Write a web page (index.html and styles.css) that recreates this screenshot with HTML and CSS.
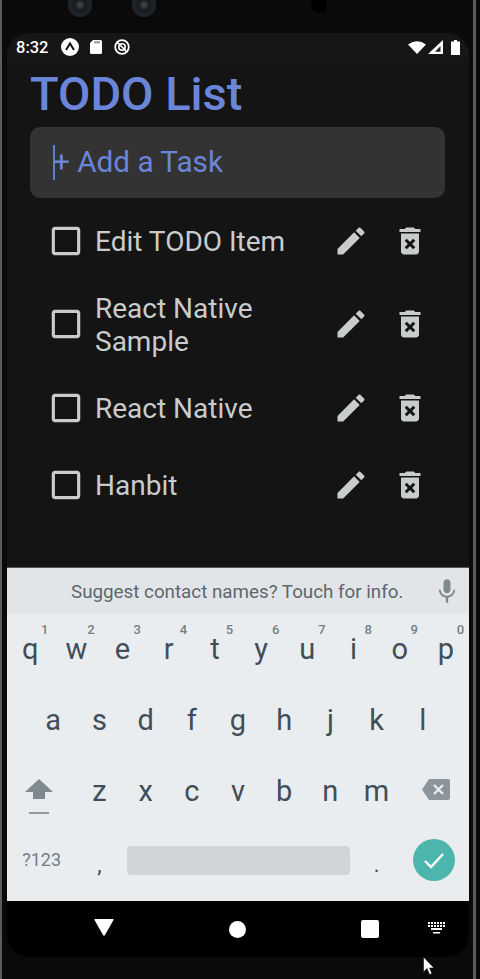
FILE: index.html
```html
<!DOCTYPE html>
<html lang="en">
<head>
<meta charset="utf-8">
<title>TODO List</title>
<link rel="stylesheet" href="styles.css">
</head>
<body>
<div class="device">
  <span class="lens lens-a"></span><span class="lens lens-b"></span><span class="hole"></span>
  <main class="screen">
    <header class="status">
      <span class="time">8:32</span>
      <svg class="st-expo" viewBox="0 0 18 18"><circle cx="9" cy="9" r="9" fill="#fff"/><path d="M5 12 9 5.500 13 12" fill="none" stroke="#111" stroke-width="2"/></svg>
      <svg class="st-sd" viewBox="0 0 12 14"><path d="M3 0H10.500Q12 0 12 1.500V12.500Q12 14 10.500 14H1.500Q0 14 0 12.500V3Z" fill="#fff"/><path d="M5 1v2.500M7 1v2.500M9 1v2.500" stroke="#222" stroke-width=".8"/></svg>
      <svg class="st-block" viewBox="0 0 16 16"><circle cx="8" cy="8" r="6.800" fill="none" stroke="#fff" stroke-width="1.800"/><circle cx="8" cy="8" r="3.200" fill="none" stroke="#fff" stroke-width="1.600"/><path d="M3 3 13 13" stroke="#fff" stroke-width="1.600"/></svg>
      <span class="st-space"></span>
      <svg class="st-wifi" viewBox="0 0 18 13"><path d="M0 3.500Q9-3 18 3.500L9 13Z" fill="#fff"/></svg>
      <svg class="st-signal" viewBox="0 0 15 14"><path d="M15 0V14H0Z" fill="#fff"/><path d="M12.500 6V11.800H7Z" fill="#222"/></svg>
      <svg class="st-batt" viewBox="0 0 9 15"><path d="M3 0H6V1.500H9V15H0V1.500H3Z" fill="#fff"/></svg>
    </header>
    <section class="app">
      <h1 class="title">TODO List</h1>
      <div class="input"><span class="caret"></span>+ Add a Task</div>
      <ul class="list">
        <li class="item">
          <svg class="icon check-icon" viewBox="0 0 24 24"><path d="M19 5v14H5V5h14m0-2H5c-1.100 0-2 .9-2 2v14c0 1.100.9 2 2 2h14c1.100 0 2-.9 2-2V5c0-1.100-.9-2-2-2z"/></svg>
          <span class="label">Edit TODO Item</span>
          <svg class="icon edit-icon" viewBox="0 0 24 24"><path d="M3 17.250V21h3.750L17.810 9.940l-3.750-3.750L3 17.250zM20.710 7.040c.39-.39.39-1.020 0-1.410l-2.340-2.340c-.39-.39-1.020-.39-1.410 0l-1.830 1.830 3.750 3.750 1.830-1.830z"/></svg>
          <svg class="icon" viewBox="0 0 24 24"><path d="M6 19c0 1.100.9 2 2 2h8c1.100 0 2-.9 2-2V7H6v12zm2.460-7.120l1.410-1.410L12 12.590l2.120-2.120 1.410 1.410L13.410 14l2.120 2.120-1.410 1.410L12 15.410l-2.120 2.120-1.410-1.410L10.590 14l-2.130-2.120zM15.500 4l-1-1h-5l-1 1H5v2h14V4z"/></svg>
        </li>
        <li class="item">
          <svg class="icon check-icon" viewBox="0 0 24 24"><path d="M19 5v14H5V5h14m0-2H5c-1.100 0-2 .9-2 2v14c0 1.100.9 2 2 2h14c1.100 0 2-.9 2-2V5c0-1.100-.9-2-2-2z"/></svg>
          <span class="label">React Native Sample</span>
          <svg class="icon edit-icon" viewBox="0 0 24 24"><path d="M3 17.250V21h3.750L17.810 9.940l-3.750-3.750L3 17.250zM20.710 7.040c.39-.39.39-1.020 0-1.410l-2.340-2.340c-.39-.39-1.020-.39-1.410 0l-1.830 1.830 3.750 3.750 1.830-1.830z"/></svg>
          <svg class="icon" viewBox="0 0 24 24"><path d="M6 19c0 1.100.9 2 2 2h8c1.100 0 2-.9 2-2V7H6v12zm2.460-7.120l1.410-1.410L12 12.590l2.120-2.120 1.410 1.410L13.410 14l2.120 2.120-1.410 1.410L12 15.410l-2.120 2.120-1.410-1.410L10.590 14l-2.130-2.120zM15.500 4l-1-1h-5l-1 1H5v2h14V4z"/></svg>
        </li>
        <li class="item">
          <svg class="icon check-icon" viewBox="0 0 24 24"><path d="M19 5v14H5V5h14m0-2H5c-1.100 0-2 .9-2 2v14c0 1.100.9 2 2 2h14c1.100 0 2-.9 2-2V5c0-1.100-.9-2-2-2z"/></svg>
          <span class="label">React Native</span>
          <svg class="icon edit-icon" viewBox="0 0 24 24"><path d="M3 17.250V21h3.750L17.810 9.940l-3.750-3.750L3 17.250zM20.710 7.040c.39-.39.39-1.020 0-1.410l-2.340-2.340c-.39-.39-1.020-.39-1.410 0l-1.830 1.830 3.750 3.750 1.830-1.830z"/></svg>
          <svg class="icon" viewBox="0 0 24 24"><path d="M6 19c0 1.100.9 2 2 2h8c1.100 0 2-.9 2-2V7H6v12zm2.460-7.120l1.410-1.410L12 12.590l2.120-2.120 1.410 1.410L13.410 14l2.120 2.120-1.410 1.410L12 15.410l-2.120 2.120-1.410-1.410L10.590 14l-2.130-2.120zM15.500 4l-1-1h-5l-1 1H5v2h14V4z"/></svg>
        </li>
        <li class="item">
          <svg class="icon check-icon" viewBox="0 0 24 24"><path d="M19 5v14H5V5h14m0-2H5c-1.100 0-2 .9-2 2v14c0 1.100.9 2 2 2h14c1.100 0 2-.9 2-2V5c0-1.100-.9-2-2-2z"/></svg>
          <span class="label">Hanbit</span>
          <svg class="icon edit-icon" viewBox="0 0 24 24"><path d="M3 17.250V21h3.750L17.810 9.940l-3.750-3.750L3 17.250zM20.710 7.040c.39-.39.39-1.020 0-1.410l-2.340-2.340c-.39-.39-1.020-.39-1.410 0l-1.830 1.830 3.750 3.750 1.830-1.830z"/></svg>
          <svg class="icon" viewBox="0 0 24 24"><path d="M6 19c0 1.100.9 2 2 2h8c1.100 0 2-.9 2-2V7H6v12zm2.460-7.120l1.410-1.410L12 12.590l2.120-2.120 1.410 1.410L13.410 14l2.120 2.120-1.410 1.410L12 15.410l-2.120 2.120-1.410-1.410L10.590 14l-2.130-2.120zM15.500 4l-1-1h-5l-1 1H5v2h14V4z"/></svg>
        </li>
      </ul>
    </section>
    <section class="keyboard">
      <div class="suggest">
        <span class="suggest-text">Suggest contact names? Touch for info.</span>
        <svg class="mic" viewBox="0 0 24 24"><path d="M12 14c1.660 0 3-1.340 3-3V5c0-1.660-1.340-3-3-3S9 3.340 9 5v6c0 1.660 1.340 3 3 3zm5.300-3c0 3-2.540 5.100-5.300 5.100S6.700 14 6.700 11H5c0 3.410 2.720 6.230 6 6.720V22h2v-4.280c3.280-.48 6-3.300 6-6.720h-1.700z"/></svg>
      </div>
      <div class="row row-top">
        <span class="key">q<sup class="hint">1</sup></span><span class="key">w<sup class="hint">2</sup></span><span class="key">e<sup class="hint">3</sup></span><span class="key">r<sup class="hint">4</sup></span><span class="key">t<sup class="hint">5</sup></span><span class="key">y<sup class="hint">6</sup></span><span class="key">u<sup class="hint">7</sup></span><span class="key">i<sup class="hint">8</sup></span><span class="key">o<sup class="hint">9</sup></span><span class="key">p<sup class="hint">0</sup></span>
      </div>
      <div class="row row-mid">
        <span class="key">a</span><span class="key">s</span><span class="key">d</span><span class="key">f</span><span class="key">g</span><span class="key">h</span><span class="key">j</span><span class="key">k</span><span class="key">l</span>
      </div>
      <div class="row row-low">
        <span class="key wide">
          <svg class="shift" viewBox="0 0 28 36"><path d="M14 0 28 13H20V20H8V13H0Z" fill="#7f8a90"/><rect x="4" y="33" width="20" height="2" fill="#8e989e"/></svg>
        </span>
        <span class="key">z</span><span class="key">x</span><span class="key">c</span><span class="key">v</span><span class="key">b</span><span class="key">n</span><span class="key">m</span>
        <span class="key wide">
          <svg class="back" viewBox="0 0 28 21"><path d="M7 0H26Q28 0 28 2V19Q28 21 26 21H7L0 10.500Z" fill="#8b959b"/><path d="M12 6 21 15M21 6 12 15" stroke="#e9edf0" stroke-width="2.400"/></svg>
        </span>
      </div>
      <div class="row row-bottom">
        <span class="key wide sym">?123</span>
        <span class="key punct">,</span>
        <span class="key space-key"><span class="space"></span></span>
        <span class="key punct">.</span>
        <span class="key wide">
          <span class="done"><svg class="check" viewBox="0 0 24 24"><path d="M3 13 9 19 21 6" fill="none" stroke="#fff" stroke-width="2.400"/></svg></span>
        </span>
      </div>
    </section>
    <nav class="nav">
      <svg class="nav-back" viewBox="0 0 20 17"><path d="M1 0H19Q20 0 19.500 1L11 16Q10 17.500 9 16L.5 1Q0 0 1 0Z" fill="#fff"/></svg>
      <span class="nav-home"></span>
      <span class="nav-recent"></span>
      <svg class="nav-kbd" viewBox="0 0 18 12"><path d="M0 0h2v2H0zM3 0h2v2H3zM6 0h2v2H6zM9 0h2v2H9zM12 0h2v2h-2zM15 0h2v2h-2zM0 3h2v2H0zM3 3h2v2H3zM6 3h2v2H6zM9 3h2v2H9zM12 3h2v2h-2zM15 3h2v2h-2zM3 6h11v2H3zM5 10h7v1.500H5z" fill="#fff"/></svg>
    </nav>
  </main>
  <svg class="cursor" viewBox="0 0 12 18"><path d="M.5 0V15L4 11.500 6.500 17.500 9 16.500 6.500 11H11Z" fill="#fff" stroke="#111" stroke-width=".6"/></svg>
</div>
</body>
</html>
```
FILE: styles.css
```css
* { box-sizing: border-box; }
html, body { margin: 0; height: 979px; overflow: hidden; background: #0a0a0a; }
body { font-family: Roboto, "Liberation Sans", sans-serif; }

.device {
  position: relative;
  width: 476px;
  height: 979px;
  padding: 33px 4px 22px 5px;
  background: #0a0a0a;
  border-left: 2px solid #5c5c5c;
  border-right: 3px solid #5c5c5c;
}
.lens { position: absolute; top: -7px; width: 24px; height: 24px; border-radius: 50%; background: radial-gradient(circle, #3a3e43 0 2px, #181a1d 5px, #22262a 12px); }
.lens-a { left: 66px; }
.lens-b { left: 130px; }
.hole { position: absolute; top: -3px; left: 309px; width: 16px; height: 16px; border-radius: 50%; background: #000; }
.cursor { position: absolute; left: 421px; top: 957px; width: 12px; height: 18px; }

.screen {
  display: flex;
  flex-direction: column;
  height: 924px;
  border-radius: 22px;
  overflow: hidden;
  background: #141414;
}

.status { display: flex; align-items: center; height: 28px; padding-left: 9px; color: #fff; flex: none; background: #161616; }
.time { font-size: 16.5px; font-weight: 500; width: 45px; }
.st-expo { width: 18px; height: 18px; margin-left: 0; }
.st-sd { width: 12px; height: 14px; margin-left: 11px; }
.st-block { width: 16px; height: 16px; margin-left: 12px; }
.st-space { flex: 1; }
.st-wifi { width: 18px; height: 13px; }
.st-signal { width: 15px; height: 14px; margin-left: 2px; }
.st-batt { width: 9px; height: 15px; margin: 0 9px 0 8px; }

.app { flex: 1; padding: 0 24px 0 23px; min-height: 0; }
.title { margin: 6px 0 0 0; font-size: 47px; line-height: 54px; font-weight: 500; color: #6b85d8; }
.input {
  position: relative;
  display: flex;
  align-items: center;
  height: 71px;
  margin-top: 6px;
  padding: 0 0 2px 23px;
  border-radius: 10px;
  background: #333333;
  color: #6b85d8;
  font-size: 29.7px;
}
.caret { position: absolute; left: 23px; top: 18px; width: 2px; height: 35px; background: #5f7fc8; }

.list { list-style: none; margin: 4px 0 0; padding: 0; }
.item { display: flex; align-items: center; min-height: 77px; padding: 12px 17px; }
.label { flex: 1; margin-left: 10px; font-size: 28px; line-height: 33px; color: #c9cccc; position: relative; top: 1px; }
.icon { flex: none; width: 36px; height: 36px; fill: #c9cccc; }
.check-icon { width: 38px; height: 38px; }
.edit-icon { margin-right: 23.500px; }

.keyboard { flex: none; background: #e9edf0; color: #414e58; }
.suggest { display: flex; align-items: center; height: 46px; background: #e2e5e8; border-top: 1px solid #55585a; }
.suggest-text { flex: 1; padding: 3px 0 0 64px; font-size: 18.8px; color: #5c676e; }
.mic { width: 28px; height: 28px; margin-right: 8px; fill: #7f8a90; }

.row { display: flex; height: 72px; justify-content: center; }
.key { position: relative; display: flex; justify-content: center; width: 46.2px; font-size: 29px; line-height: 72px; }
.row-mid .key { line-height: 70px; }
.row-low .key { line-height: 68px; }
.hint { position: absolute; left: 34px; top: 9px; font-size: 13px; font-weight: 500; line-height: 16px; color: #747f85; vertical-align: baseline; }
.wide { width: 69.3px; align-items: center; }
.shift { width: 28px; height: 36px; margin: 8px 6px 0 0; }
.back { width: 28px; height: 21px; margin: 0 0 8px 4px; }
.row-bottom .wide, .space-key { padding-bottom: 10px; }
.sym { font-size: 18px; color: #747f85; line-height: 62px; }
.punct { font-size: 22px; }
.space-key { width: 231px; align-items: center; padding-left: 4px; padding-right: 4px; }
.space { flex: 1; height: 29px; border-radius: 4px; background: #d1d5d8; }
.done { display: flex; align-items: center; justify-content: center; width: 42px; height: 42px; border-radius: 50%; background: #4db6ac; }
.check { width: 24px; height: 24px; }

.nav { display: flex; align-items: center; flex: none; height: 56px; background: #000; position: relative; }
.nav-back { width: 20px; height: 17px; margin: 0 0 4px 87px; }
.nav-home { width: 17px; height: 17px; margin-left: 115px; border-radius: 50%; background: #fff; }
.nav-recent { width: 18px; height: 18px; margin-left: 115px; border-radius: 2px; background: #fff; }
.nav-kbd { width: 18px; height: 12px; margin: 0 0 2px 49px; }
```
